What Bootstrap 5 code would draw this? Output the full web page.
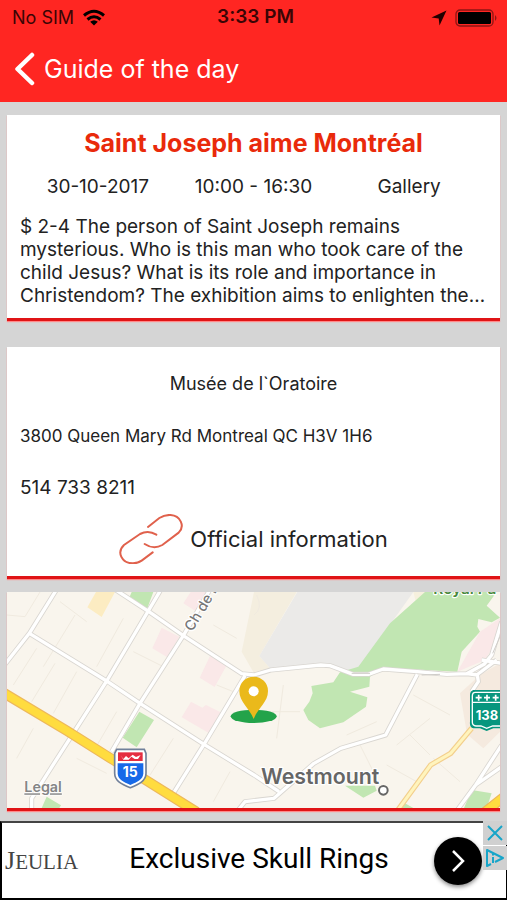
<!DOCTYPE html>
<html lang="en">
<head>
<meta charset="utf-8">
<meta name="viewport" content="width=device-width, initial-scale=1">
<title>Guide of the day</title>
<link href="https://cdn.jsdelivr.net/npm/bootstrap@5.3.0/dist/css/bootstrap.min.css" rel="stylesheet">
<style>
  body { background: #d5d5d5; font-family: Inter, "Liberation Sans", sans-serif; color: #222; }
  .app-header { background: #ff2622; }
  .status-bar { height: 35px; font-size: 18px; color: #3a0505; }
  .status-side { flex: 1 1 0; }
  .status-clock { font-size: 19px; }
  .title-bar { height: 67px; padding: 0 14px; }
  .back-link { font-size: 25px; line-height: 32px; color: #fff; gap: 9px; }
  .app-main { padding: 13px 7px 10px; }
  .panel { background: #fff; border-bottom: 3px solid #e01416; box-shadow: 0 1px 1px #ff8a8a; }
  .event-panel { padding: 12px 13px 11px; margin-bottom: 26px; }
  .place-panel { padding: 25px 13px 12px; margin-bottom: 13px; }
  .event-title { font-size: 25px; line-height: 32px; color: #e92a0b; }
  .event-meta { font-size: 19px; line-height: 24px; margin: 16px 0; }
  .event-text { font-size: 19px; line-height: 23px; }
  .place-name { font-size: 18px; line-height: 24px; margin-bottom: 28px; }
  .place-address { font-size: 17px; line-height: 24px; margin-bottom: 28px; }
  .place-phone { font-size: 19px; line-height: 24px; margin-bottom: 14px; }
  .info-link { font-size: 22px; color: #222; gap: 7px; }
  .map-panel svg { height: 216px; }
  .ad-bar { background: #fff; border: solid #000; border-width: 2px 1px 2px 2px; border-top-color: #444; height: 79px; }
  .ad-brand { font-family: "Liberation Serif", serif; font-size: 21px; color: #444; width: 82px; padding-left: 3px; }
  .ad-brand span { font-size: 26px; }
  .ad-title { font-family: Roboto, sans-serif; font-size: 28px; line-height: 34px; color: #000; padding-bottom: 4px; }
  .ad-go { width: 48px; height: 48px; background: #000; margin-right: 24px; box-shadow: 0 2px 4px #0007; }
  .ad-tools { top: -2px; right: -1px; width: 24px; gap: 1px; }
  .ad-tools button { height: 24px; background: #d0d0d0; }
</style>
</head>
<body>
<header class="app-header">
  <div class="status-bar d-flex align-items-center">
    <div class="status-side d-flex align-items-center gap-2 ps-2 ms-1">
      <span>No SIM</span>
      <svg width="24" height="17" viewBox="0 0 24 17" fill="none" stroke="#000" stroke-width="3" aria-hidden="true"><path d="M2 6.500q10-8.500 20 0M5.500 10.500q6.500-5.500 13 0"/><path d="M12 16.500l-3.800-3.700q3.800-3 7.600 0z" fill="#000" stroke="none"/></svg>
    </div>
    <span class="status-clock fw-semibold">3:33 PM</span>
    <div class="status-side d-flex align-items-center justify-content-end pe-2 gap-2">
      <svg width="16" height="16" viewBox="0 0 16 16" aria-hidden="true"><path d="M15.500 0.500L8.500 15.500L7.700 8.500L0.500 7.500z" fill="#200"/></svg>
      <svg width="44" height="18" viewBox="0 0 44 18" aria-hidden="true"><rect x="1" y="1" width="37" height="16" rx="4" fill="none" stroke="#8c1614" stroke-width="1.300"/><rect x="3" y="3" width="33" height="12" rx="1.500" fill="#000"/><path d="M40 6q3 3 0 6z" fill="#8c1614"/></svg>
    </div>
  </div>
  <nav class="title-bar d-flex align-items-center" aria-label="Back">
    <a href="#" class="back-link d-flex align-items-center text-decoration-none">
      <svg width="21" height="34" viewBox="0 0 21 34" fill="none" stroke="#fff" stroke-width="4.500" stroke-linecap="round" stroke-linejoin="round" aria-hidden="true"><path d="M18 3L3.500 17L18 31"/></svg>
      <span>Guide of the day</span>
    </a>
  </nav>
</header>

<main class="app-main">
  <section class="panel event-panel">
    <h1 class="event-title fw-bold text-center mb-0">Saint Joseph aime Montréal</h1>
    <div class="event-meta row g-0 text-center">
      <div class="col-4">30-10-2017</div>
      <div class="col-4">10:00 - 16:30</div>
      <div class="col-4">Gallery</div>
    </div>
    <p class="event-text mb-0">$ 2-4 The person of Saint Joseph remains mysterious. Who is this man who took care of the child Jesus? What is its role and importance in Christendom? The exhibition aims to enlighten the…</p>
  </section>

  <section class="panel place-panel">
    <p class="place-name text-center">Musée de l`Oratoire</p>
    <p class="place-address">3800 Queen Mary Rd Montreal QC H3V 1H6</p>
    <p class="place-phone">514 733 8211</p>
    <a href="#" class="info-link d-flex align-items-center justify-content-center text-decoration-none">
      <svg width="64" height="50" viewBox="0 0 192 150" fill="none" stroke="#e0614c" stroke-width="6" stroke-linecap="round" aria-hidden="true"><path d="M87 39L121 12Q137 2 155 3C184 5 199 36 179 56L130 93Q104 108 77 90M112 62Q88 47 63 60L15 93C-8 115 8 148 42 148Q57 148 68 140L101 115"/></svg>
      <span>Official information</span>
    </a>
  </section>

  <section class="panel map-panel" aria-label="Map">
    <svg class="d-block w-100" viewBox="21 21 1479 648" preserveAspectRatio="xMidYMid slice" role="img" aria-label="Map of Westmount">
      <rect x="-500" y="0" width="2600" height="700" fill="#f9f5ed"/>
      <!-- areas -->
      <path d="M762 21H890L778 213L810 250L762 265L725 200z" fill="#f4eedf"/>
      <path d="M892 21H1240L1080 245L1060 262L990 240L810 250L778 213z" fill="#ebeae8"/>
      <path d="M1240 21L1310 21L1250 60z" fill="#f6f0dd"/>
      <path d="M1275 21H1490L1460 62L1500 98L1475 112L1435 102L1432 125L1440 140L1385 200L1372 260L1150 248L1110 275L1108 305L1050 320L1102 337L1098 365L1030 412L960 430L925 405L910 375L928 350L938 325L934 303L1000 292L1020 262L1075 245L1170 115z" fill="#c1e6b2"/>
      <path d="M1440 140L1500 100V150L1455 225L1372 260z" fill="#fae8e8"/>
      <path d="M1380 325L1440 270L1500 235V440L1450 490L1410 455L1400 440z" fill="#f5eadf"/>
      <path d="M395 21H460L440 75L385 45z M418 380L462 405L410 487L368 458z M140 635L183 661L178 669H125z M1035 602H1125L1130 617L1090 638z M1415 615L1475 625L1460 669H1392z M1215 655L1240 669H1205z" fill="#c1e6b2"/>
      <path d="M288 21H345L305 96L262 67z" fill="#fcecc2"/>
      <path d="M485 128L538 155L502 217L457 190z M630 213L680 241L644 306L599 278z M573 350L607 368L618 360L662 382L630 446L545 397z M572 21H625L590 80L550 55z" fill="#fae8e8"/>
      <!-- faint lanes -->
      <g fill="none" stroke="#f0eadf" stroke-width="3">
        <path d="M21 90L75 95L120 21M40 300L110 190M95 350L165 235M160 385L230 260M225 90L130 245M180 50L260 110M370 100L290 245M490 245L400 200M350 380L280 500M230 520L320 565M100 430L50 520M700 320L650 300M520 460L450 570M690 560L640 650M850 300L830 460M800 380H900M1040 450L1130 410M1190 480L1290 400M1240 330L1350 390M1080 480L1120 560M1160 540L1250 590M1230 450L1290 510M1300 520L1380 590M640 120L710 160M762 90Q790 70 770 30"/>
      </g>
      <!-- streets: casing, then fill -->
      <g fill="none" stroke="#d9d6d1" stroke-width="15" stroke-linejoin="round">
        <path d="M172 10L88 145L15 238M340 10L450 82L550 152L725 266L762 270L812 255L962 240L990 242L1060 268L1105 268L1150 252L1252 260L1340 268L1400 266L1452 238L1475 210L1505 110M88 145L320 288L420 355L612 478L762 570L837 620M485 10L320 288L210 460L95 640V675M632 10L550 152L420 355L335 500M735 272L612 478L520 625M1252 268L1157 450L1022 490L942 535L822 640L735 650L715 675M1505 480L1427 600L1372 675M1505 545L1427 600M1400 266L1432 270L1435 290L1415 320M1445 225L1505 235M1430 270L1490 225"/>
      </g>
      <g fill="none" stroke="#fff" stroke-width="10" stroke-linejoin="round">
        <path d="M172 10L88 145L15 238M340 10L450 82L550 152L725 266L762 270L812 255L962 240L990 242L1060 268L1105 268L1150 252L1252 260L1340 268L1400 266L1452 238L1475 210L1505 110M88 145L320 288L420 355L612 478L762 570L837 620M485 10L320 288L210 460L95 640V675M632 10L550 152L420 355L335 500M735 272L612 478L520 625M1252 268L1157 450L1022 490L942 535L822 640L735 650L715 675M1505 480L1427 600L1372 675M1505 545L1427 600M1400 266L1432 270L1435 290L1415 320M1445 225L1505 235M1430 270L1490 225"/>
      </g>
      <path d="M1055 265H1110M1265 270L1320 268M1478 205L1500 155" fill="none" stroke="#cfccc8" stroke-width="3"/>
      <path d="M1415 430L1352 505L1292 540L1190 680" fill="none" stroke="#f3cf8c" stroke-width="16"/>
      <path d="M1415 430L1352 505L1292 540L1190 680" fill="none" stroke="#fff4bd" stroke-width="9"/>
      <path d="M10 323L200 437L340 525L440 587L590 681M1450 685L1510 637" fill="none" stroke="#edb85c" stroke-width="31"/>
      <path d="M10 323L200 437L340 525L440 587L590 681M1450 685L1510 637" fill="none" stroke="#ffdc3f" stroke-width="24"/>
      <!-- labels -->
      <g font-family="Inter, sans-serif" stroke="#fff" stroke-width="7" stroke-linejoin="round" paint-order="stroke">
        <text x="577" y="142" font-size="43" font-weight="500" fill="#777" transform="rotate(-59 577 142)">Ch de l</text>
        <text x="783" y="596" font-size="64" font-weight="600" fill="#666">Westmount</text>
        <text x="1300" y="28" font-size="46" font-weight="600" fill="#48883c">Royal Pa</text>
        <text x="73" y="622" font-size="43" font-weight="600" fill="#858585" stroke-width="4" text-decoration="underline">Legal</text>
      </g>
      <circle cx="1150" cy="616" r="13" fill="#fff" stroke="#666" stroke-width="6"/>
      <!-- interstate shield -->
      <path d="M350 493H433L438 505V565C438 588 417 598 391 608C365 598 344 588 344 565V505z" fill="#fff" stroke="#71809a" stroke-width="5"/>
      <path d="M354 502H428V528H354z" fill="#e52d40"/>
      <path d="M362 511L370 522L378 513L386 520L398 509L408 516L422 510L414 522H404L394 515L386 524H370z" fill="#fff"/>
      <path d="M353 535H430V565C430 583 412 591 391 600C370 591 353 583 353 565z" fill="#1769e8"/>
      <text x="391" y="577" font-family="Inter, sans-serif" font-size="42" font-weight="700" fill="#fff" text-anchor="middle">15</text>
      <!-- route 138 shield -->
      <path d="M1420 315H1510V430H1480L1460 438L1440 430H1420Q1408 428 1410 410V330Q1410 318 1420 315z" fill="#07967e"/>
      <path d="M1510 322H1426Q1417 322 1417 333V412Q1417 422 1428 423H1443L1460 430L1478 423H1510M1417 352H1510" fill="none" stroke="#fff" stroke-width="4"/>
      <path d="M1436 329V347M1427 338H1445M1461 329V347M1452 338H1470M1487 329V347M1478 338H1496" stroke="#fff" stroke-width="5"/>
      <text x="1461" y="404" font-family="Inter, sans-serif" font-size="39" font-weight="700" fill="#fff" text-anchor="middle">138</text>
      <!-- pin -->
      <ellipse cx="761" cy="394" rx="69" ry="20" fill="#23a34a"/>
      <path d="M761 402C748 368 718 352 718 318A43 43 0 0 1 804 318C804 352 774 368 761 402z" fill="#eab91b"/>
      <circle cx="761" cy="319" r="15" fill="#fff"/>
    </svg>
  </section>
</main>

<footer class="ad-bar position-relative d-flex align-items-center">
  <div class="ad-brand"><span>J</span>EULIA</div>
  <div class="ad-title flex-fill text-center">Exclusive Skull Rings</div>
  <button type="button" class="ad-go btn rounded-circle border-0 p-0 d-flex align-items-center justify-content-center" aria-label="Open">
    <svg width="14" height="22" viewBox="0 0 14 22" fill="none" stroke="#fff" stroke-width="2.500" aria-hidden="true"><path d="M2 1L12 11L2 21"/></svg>
  </button>
  <div class="ad-tools position-absolute d-flex flex-column">
    <button type="button" class="border-0 p-0 d-flex align-items-center justify-content-center" aria-label="Close ad">
      <svg width="16" height="16" viewBox="0 0 16 16" stroke="#17a5c9" stroke-width="2" aria-hidden="true"><path d="M1 1L15 15M15 1L1 15"/></svg>
    </button>
    <button type="button" class="border-0 p-0 d-flex align-items-center justify-content-center" aria-label="Ad choices">
      <svg width="20" height="20" viewBox="0 0 20 20" fill="none" stroke="#17a5c9" stroke-width="2" stroke-linejoin="round" aria-hidden="true"><path d="M6 16L2 18V2L18 10L10 14"/><path d="M8 9V15M8 5.500V7.500"/></svg>
    </button>
  </div>
</footer>
<script src="https://cdn.jsdelivr.net/npm/bootstrap@5.3.0/dist/js/bootstrap.bundle.min.js"></script>
</body>
</html>
